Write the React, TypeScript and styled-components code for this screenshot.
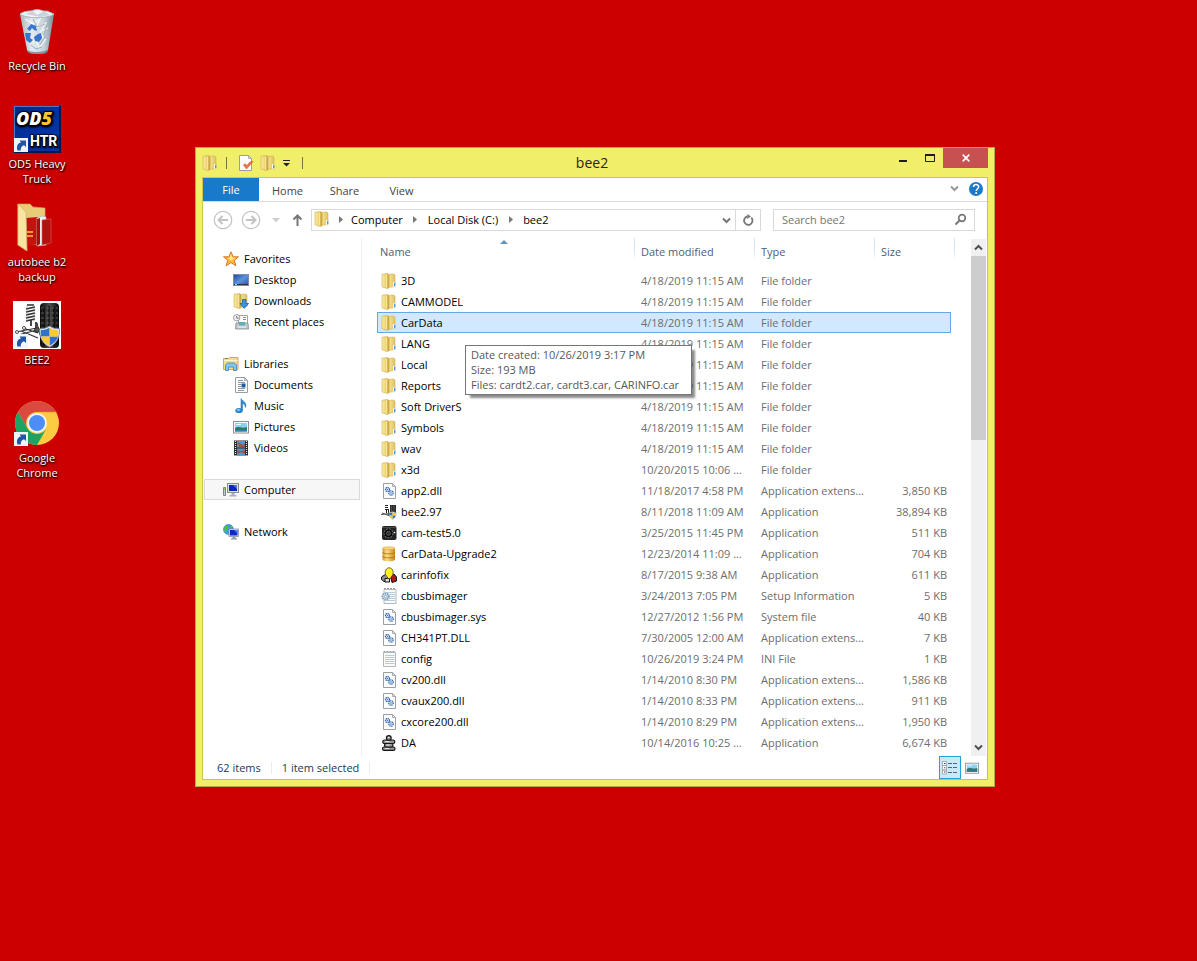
import React from 'react';
import styled, { createGlobalStyle, css } from 'styled-components';

const GlobalStyle = createGlobalStyle`
  *, *::before, *::after { box-sizing: border-box; }
  html, body { margin: 0; height: 100%; }
  body {
    background: #cc0000;
    font-family: "Open Sans", "Noto Sans", sans-serif;
    font-size: 11px;
    line-height: 15px;
    color: #000;
  }
  button, input { font: inherit; color: inherit; }
  svg { display: block; flex: none; }
`;

/* ---------- Desktop ---------- */

const Desktop = styled.main`
  position: relative;
  min-height: 100vh;
  overflow: hidden;
  background: #cc0000;
`;

const Shortcuts = styled.nav`
  display: flex;
  flex-direction: column;
  width: 74px;
  padding-top: 7px;
`;

const Shortcut = styled.button`
  display: flex;
  flex-direction: column;
  align-items: center;
  gap: 3px;
  height: 98px;
  padding: 0;
  border: 0;
  background: none;
  color: #fff;
  text-shadow: 1px 1px 2px #000, 0 1px 2px rgba(0, 0, 0, 0.8);
`;

/* ---------- Window frame ---------- */

const Window = styled.section`
  position: absolute;
  left: 195px;
  top: 147px;
  width: 800px;
  height: 640px;
  display: flex;
  flex-direction: column;
  padding: 0 6px 6px;
  border: 1px solid #b4ac45;
  background: #f1ee69;
`;

const TitleBar = styled.header`
  display: grid;
  grid-template-columns: 1fr auto 1fr;
  height: 29px;
  margin: 0 0 0 -6px;
`;

const QuickAccess = styled.div`
  display: flex;
  align-items: center;
  padding-left: 6px;
`;

const PlainButton = styled.button`
  display: flex;
  align-items: center;
  justify-content: center;
  padding: 0;
  border: 0;
  background: none;
`;

const QuickButton = styled(PlainButton)<{ $menu?: boolean }>`
  width: ${p => (p.$menu ? 15 : 22)}px;
  height: 20px;
`;

const QuickDivider = styled.span`
  width: 1px;
  height: 12px;
  margin: 0 8px;
  background: #77753b;
`;

const Title = styled.h1`
  margin: 0;
  font-size: 14px;
  font-weight: 400;
  line-height: 30px;
  color: #26261a;
`;

const Controls = styled.div`
  display: flex;
  justify-content: flex-end;
`;

const ControlButton = styled(PlainButton)<{ $close?: boolean }>`
  width: ${p => (p.$close ? 45 : 27)}px;
  height: 20px;
  background: ${p => (p.$close ? '#c75050' : 'transparent')};
`;

const Client = styled.div`
  flex: 1;
  min-height: 0;
  display: flex;
  flex-direction: column;
  border: 1px solid #c9c54f;
  background: #fff;
`;

/* ---------- Ribbon ---------- */

const Ribbon = styled.div`
  display: flex;
  height: 24px;
  border-bottom: 1px solid #dadbdc;
  padding-right: 3px;
`;

const RibbonTab = styled.button<{ $file?: boolean }>`
  width: ${p => (p.$file ? 56 : 57)}px;
  height: ${p => (p.$file ? 23 : 25)}px;
  padding: 0;
  border: 0;
  background: ${p => (p.$file ? '#1979ca' : 'transparent')};
  color: ${p => (p.$file ? '#fff' : '#444')};
`;

const RibbonTools = styled.div`
  display: flex;
  align-items: center;
  gap: 9px;
  margin-left: auto;
  padding-bottom: 2px;
`;

/* ---------- Address row ---------- */

const AddressRow = styled.div`
  display: flex;
  align-items: center;
  height: 36px;
  padding: 0 12px 0 10px;
`;

const Travel = styled.div`
  display: flex;
  align-items: center;
  width: 98px;
  gap: 8px;
`;

const AddressBox = styled.div`
  flex: 1;
  display: flex;
  height: 22px;
  border: 1px solid #d9d9d9;
`;

const Crumbs = styled.div`
  flex: 1;
  display: flex;
  align-items: center;
  padding: 0 0 2px 2px;
`;

const Crumb = styled.button`
  padding: 0;
  border: 0;
  background: none;
`;

const CrumbArrow = styled.span<{ $first: boolean }>`
  width: ${p => (p.$first ? 21 : 25)}px;
  display: flex;
  justify-content: center;
`;

const BoxButton = styled(PlainButton)<{ $divided?: boolean }>`
  width: ${p => (p.$divided ? 25 : 18)}px;
  border-left: ${p => (p.$divided ? '1px solid #d9d9d9' : '0')};
`;

const SearchBox = styled.label`
  display: flex;
  align-items: center;
  width: 202px;
  height: 22px;
  margin-left: 12px;
  padding: 0 7px 2px 8px;
  border: 1px solid #d9d9d9;
`;

const SearchInput = styled.input`
  flex: 1;
  min-width: 0;
  padding: 0;
  border: 0;
  outline: 0;
  background: none;
  &::placeholder { color: #757575; opacity: 1; }
`;

/* ---------- Body ---------- */

const Body = styled.div`
  flex: 1;
  min-height: 0;
  display: flex;
`;

const NavPane = styled.nav`
  width: 159px;
  padding: 10px 1px 0 1px;
  border-right: 1px solid #f0f0f0;
`;

const NavGroup = styled.ul`
  margin: 0 0 21px;
  padding: 0;
  list-style: none;
`;

const NavItem = styled.button<{ $child?: boolean; $current?: boolean }>`
  display: flex;
  align-items: center;
  gap: 5px;
  width: 100%;
  height: 21px;
  padding: 0 0 0 ${p => (p.$child ? 28 : 18)}px;
  border: 1px solid ${p => (p.$current ? '#dadada' : 'transparent')};
  background: ${p => (p.$current ? '#f7f7f7' : 'none')};
`;

const FilePane = styled.div`
  flex: 1;
  min-width: 0;
  overflow: hidden;
  padding: 0 20px 0 15px;
`;

const FileTable = styled.table`
  width: 100%;
  table-layout: fixed;
  border-collapse: separate;
  border-spacing: 0;
`;

const HeadCell = styled.th<{ $width?: number; $sorted?: boolean; $last?: boolean }>`
  position: relative;
  width: ${p => (p.$width ? `${p.$width}px` : 'auto')};
  height: 32px;
  padding: 0 0 5px ${p => (p.$sorted ? 3 : 6)}px;
  font-weight: 400;
  text-align: left;
  color: #4c607a;
  &::after {
    content: '';
    position: absolute;
    top: 0;
    right: ${p => (p.$last ? -4 : 0)}px;
    width: 1px;
    height: 22px;
    background: linear-gradient(#d5e5f2 60%, #fff);
  }
`;

const SortMark = styled.svg`
  position: absolute;
  left: 50%;
  top: 2px;
  margin-left: -6px;
`;

const selectedCell = css`
  background: #d1e8ff;
  border-top: 1px solid #66a7e8;
  border-bottom: 1px solid #66a7e8;
  &:first-child { border-left: 1px solid #66a7e8; padding-left: 3px; }
  &:last-child { border-right: 1px solid #66a7e8; }
`;

const Cell = styled.td<{ $selected?: boolean; $kind?: 'name' | 'size' }>`
  height: 21px;
  padding: ${p => (p.$kind === 'name' ? '0 0 0 4px' : p.$kind === 'size' ? '0 4px 0 0' : '0 8px 0 6px')};
  border: 0 solid transparent;
  line-height: 19px;
  white-space: nowrap;
  overflow: hidden;
  text-align: ${p => (p.$kind === 'size' ? 'right' : 'left')};
  color: ${p => (p.$kind === 'name' ? '#000' : '#6d6d6d')};
  ${p => p.$selected && selectedCell}
`;

const FileName = styled.span`
  display: flex;
  align-items: center;
  gap: 4px;
`;

const ScrollBar = styled.div`
  display: flex;
  flex-direction: column;
  width: 15px;
  margin: 1px 1px 0 0;
  background: #f0f0f0;
`;

const ScrollButton = styled(PlainButton)`
  height: 17px;
`;

const ScrollTrack = styled.div`
  flex: 1;
`;

const ScrollThumb = styled.div`
  height: 38%;
  background: #cdcdcd;
`;

/* ---------- Status bar ---------- */

const StatusBar = styled.footer`
  display: flex;
  align-items: center;
  height: 23px;
  padding-left: 14px;
  color: #1e395b;
`;

const StatusText = styled.span`
  padding-right: 10px;
  margin-right: 10px;
  line-height: 12px;
  border-right: 1px solid #ececec;
`;

const Views = styled.div`
  display: flex;
  margin-left: auto;
  padding-right: 4px;
`;

const ViewButton = styled(PlainButton)<{ $on?: boolean }>`
  width: 22px;
  height: 23px;
  border: 1px solid ${p => (p.$on ? '#26a0da' : 'transparent')};
  background: ${p => (p.$on ? '#cbe8f6' : 'none')};
`;

const Tooltip = styled.div`
  position: absolute;
  left: 269px;
  top: 197px;
  min-width: 227px;
  padding: 1px 5px 2px;
  border: 1px solid #767676;
  background: #fff;
  color: #575757;
  white-space: nowrap;
  box-shadow: 4px 4px 2px -1px rgba(0, 0, 0, 0.45);
`;

/* ---------- Icons ---------- */

const Defs = () => (
  <svg width="0" height="0" style={{ position: 'absolute' }} aria-hidden="true">
    <defs>
      <linearGradient id="fold" x1="0" x2="1"><stop offset="0" stopColor="#fbeea6" /><stop offset="0.55" stopColor="#edd272" /><stop offset="1" stopColor="#c9a23c" /></linearGradient>
      <linearGradient id="foldBack" x1="0" x2="1"><stop offset="0" stopColor="#bd9434" /><stop offset="0.4" stopColor="#f3de8c" /><stop offset="1" stopColor="#dfc263" /></linearGradient>
      <linearGradient id="bin" x1="0" x2="1"><stop offset="0" stopColor="#a9b6be" /><stop offset="0.35" stopColor="#e4ebf0" /><stop offset="0.7" stopColor="#c6d3db" /><stop offset="1" stopColor="#7f8b94" /></linearGradient>
      <linearGradient id="screen" x1="0" x2="1" y2="1"><stop offset="0" stopColor="#1c3f9b" /><stop offset="0.5" stopColor="#5a93e0" /><stop offset="1" stopColor="#1f55b5" /></linearGradient>
      <linearGradient id="tyre" x1="0" x2="1"><stop offset="0" stopColor="#0c0c0c" /><stop offset="0.5" stopColor="#4c4c4c" /><stop offset="1" stopColor="#060606" /></linearGradient>
      <linearGradient id="gold" x1="0" x2="1"><stop offset="0" stopColor="#d8951f" /><stop offset="0.35" stopColor="#fde08a" /><stop offset="1" stopColor="#c98418" /></linearGradient>
      <linearGradient id="od" x1="0" y1="0" x2="1" y2="1"><stop offset="0" stopColor="#002a8c" /><stop offset="1" stopColor="#0638ae" /></linearGradient>
    </defs>
  </svg>
);

const S16 = ({ children }: { children: React.ReactNode }) => (
  <svg width="16" height="16" viewBox="0 0 16 16" aria-hidden="true">{children}</svg>
);

const FolderArt = () => (
  <>
    <path d="M5.500 1.500 12.500 1 14 2 14 13.500 6 14.500z" fill="url(#foldBack)" stroke="#d1b055" strokeWidth="0.6" />
    <path d="M1 1.300 6.500.5 8 2 8 14.800 6 15.500 1 13.800z" fill="url(#fold)" stroke="#cfab4b" strokeWidth="0.6" />
    <path d="M5.500 1.500V14.800" stroke="#f9ecae" strokeWidth="0.8" />
    <path d="M12 9.200h2v4.200l-2 .4z" fill="#fff" />
    <path d="M13 9.800h1.300v3.400H13z" fill="#3f9fe2" />
  </>
);
const FolderIcon = () => <S16><FolderArt /></S16>;

const PageArt = () => (
  <>
    <path d="M1.500.5h9l3 3v12h-12z" fill="#fdfdfd" stroke="#9a9fa4" />
    <path d="M10.500.500v3h3z" fill="#e2e5e8" stroke="#9a9fa4" strokeWidth="0.8" />
  </>
);

const DllIcon = () => (
  <S16>
    <g transform="translate(1 0)">
      <PageArt />
      <circle cx="5.500" cy="6.500" r="2" fill="#e3efff" stroke="#3567ae" strokeWidth="1.300" strokeDasharray="1.200 .5" />
      <circle cx="9" cy="10" r="2.200" fill="#e3efff" stroke="#3567ae" strokeWidth="1.300" strokeDasharray="1.200 .5" />
      <circle cx="5.500" cy="6.500" r=".6" fill="#3567ae" />
      <circle cx="9" cy="10" r=".7" fill="#3567ae" />
    </g>
  </S16>
);

const NotepadArt = () => (
  <>
    <path d="M1.500 1.500h12v14h-12z" fill="#fafafa" stroke="#b3b7ba" />
    <path d="M1.500.5h12" stroke="#9a9a9a" strokeDasharray="2 1" />
    <path d="M3 4.500h9.500M3 6.500h9.500M3 8.500h9.500M3 10.500h9.500M3 12.500h9.500" stroke="#b5cddb" />
  </>
);
const IniIcon = () => <S16><g transform="translate(1 0)"><NotepadArt /></g></S16>;
const SetupIcon = () => (
  <S16>
    <g transform="translate(1.500 0)"><NotepadArt /></g>
    <circle cx="4.500" cy="8.500" r="3.200" fill="#c8dbea" stroke="#7f9fbc" strokeWidth="1.800" strokeDasharray="1.500 .8" />
    <circle cx="4.500" cy="8.500" r="1.200" fill="#fff" stroke="#7c9cb9" strokeWidth="0.7" />
  </S16>
);

const ShieldArt = () => (
  <>
    <path d="M8 0c2.400 1.700 4.800 2 7.500 2 .4 6.500-2 11-7.500 14C2.500 13 .1 8.500.5 2 3.200 2 5.600 1.700 8 0z" fill="#e6e9ec" stroke="#6b7d8e" strokeWidth="0.6" />
    <path d="M8 1.300V8H1.600C1.400 6.500 1.300 5 1.400 3 4 3 6 2.600 8 1.300zM8 8h6.400C13.500 11 11.500 13.200 8 15z" fill="#2e72c9" />
    <path d="M8 1.300V8h6.400c.2-1.500.3-3 .2-5C12 3 10 2.600 8 1.300zM8 8H1.600C2.500 11 4.500 13.200 8 15z" fill="#fbc930" />
  </>
);

const AlignArt = () => (
  <>
    <rect x="27" y="2" width="19" height="45" rx="4" fill="url(#tyre)" />
    <path d="M31 6v39M36 5v41M41 6v39" stroke="#050505" strokeWidth="1.200" />
    <path d="M28 7h17M28 12h17M28 17h17M28 22h17M28 27h17M28 32h17M28 37h17" stroke="#6b6b6b" strokeWidth=".8" strokeDasharray="3 2" />
    <path d="M14 4h7M13 8l9-2M13 11l9-2M13 14l9-2M13 17l9-2M13 20l9-2" fill="none" stroke="#2b2b2b" strokeWidth="1.600" />
    <path d="M14 4v16M21 4v16" stroke="#8a8a8a" strokeWidth=".6" />
    <path d="M18 19v6M23 21v10" stroke="#333" strokeWidth="1.800" />
    <path d="M3 31l21-4M5 34l19-5M10 27l15 5M8 30l17 7M24 22l3 12" stroke="#333" strokeWidth="1.100" fill="none" />
    <g fill="#fff" stroke="#222" strokeWidth=".8"><circle cx="4" cy="31" r="1.500" /><circle cx="11" cy="27" r="1.500" /><circle cx="24" cy="29" r="2.500" fill="#555" /></g>
  </>
);

const BeeIcon = () => (
  <S16>
    <path d="M9 1h6v9H9z" fill="#2a2a2a" />
    <path d="M10.500 1.500v8M13 1.500v8" stroke="#6d6d6d" strokeWidth=".6" />
    <path d="M4 1.500h3M4 3.500h3M4 5.500h3M5.500 6v3M7.500 5v6" stroke="#222" />
    <path d="M0 10.500l9-1M1 9l8 3" stroke="#555" strokeWidth="1.200" />
    <g transform="translate(7.500 7.500) scale(.5)"><ShieldArt /></g>
  </S16>
);

const CamIcon = () => (
  <S16>
    <rect x="1" y="1" width="14.500" height="14" rx="2" fill="#242424" />
    <path d="M1.500 2.500h13" stroke="#555" strokeWidth=".8" />
    <circle cx="7.500" cy="8.300" r="4.500" fill="#0b0b0b" stroke="#a9a9a9" strokeWidth=".7" strokeDasharray="2 1" />
    <circle cx="7.500" cy="8.300" r="2" fill="#2b2b2b" stroke="#888" strokeWidth=".6" />
    <circle cx="13.500" cy="7.500" r=".8" fill="#fff" />
  </S16>
);

const DatabaseIcon = () => (
  <S16>
    <path d="M1.500 2.500v11c0 1 2.500 1.800 6.200 1.800s6.300-.8 6.300-1.800v-11z" fill="url(#gold)" />
    <ellipse cx="7.750" cy="2.300" rx="6.250" ry="1.500" fill="#f8d67a" stroke="#d39a30" strokeWidth=".5" />
    <path d="M1.500 6.200c0 1 2.500 1.600 6.200 1.600S14 7.200 14 6.200M1.500 10.200c0 1 2.500 1.600 6.200 1.600s6.300-.6 6.300-1.600" fill="none" stroke="#a56c14" strokeWidth=".8" />
  </S16>
);

const CarInfoIcon = () => (
  <S16>
    <path d="M.5 10 5 7l2 2.500v5H3L.5 12.500z" fill="#8d8d8d" stroke="#111" />
    <path d="M9.500 9l3.500-2 2.500 3v4L11 15.500z" fill="#b11a1a" stroke="#111" />
    <path d="M4 15V11.500h4.500V15z" fill="#ddd" stroke="#111" />
    <path d="M6.500 10C2.500 7.500 4 .8 8.200.8s5.500 6.700 1.700 9.200v1.500H6.500z" fill="#fff31a" stroke="#444" strokeWidth=".8" />
  </S16>
);

const PawnIcon = () => (
  <S16>
    <g fill="#9a9a9a" stroke="#181818" strokeWidth="1.200">
      <rect x="1.500" y="12" width="12.500" height="3.300" rx="1.600" />
      <rect x="3.500" y="8.500" width="8.500" height="3.500" rx="1.700" />
      <rect x="1.800" y="5" width="12" height="3.500" rx="1.700" />
      <circle cx="7.800" cy="3" r="2.400" />
    </g>
    <path d="M4.500 6.500h4M5.500 10h3M4 13.500h4M7 2.500h1.500" stroke="#e6e6e6" />
  </S16>
);

const StarIcon = () => (
  <S16>
    <path d="M8 .8l2.100 5h5.400l-4.200 3.500 1.600 5.500L8 11.600l-4.900 3.200 1.600-5.500L.5 5.800h5.400z" fill="#fdb739" stroke="#d9772b" strokeWidth="1" strokeLinejoin="round" />
    <path d="M8 3l1.400 3.800h3.200L8 9.500 4 7h2.600z" fill="#ffe88a" />
  </S16>
);
const DesktopIcon = () => (
  <S16>
    <rect x="0.500" y="2.500" width="15" height="11" fill="url(#screen)" stroke="#7b8da1" />
    <path d="M1 12.500h14" stroke="#2a3140" /><path d="M2 12.500h2" stroke="#8dd0f2" />
  </S16>
);
const DownloadsIcon = () => (
  <S16>
    <FolderArt />
    <path d="M9.500 6.500h3.500v4h2.500L11.200 15.400 7 10.500h2.500z" fill="#3b96df" stroke="#1860ac" strokeWidth=".8" />
  </S16>
);
const RecentIcon = () => (
  <S16>
    <path d="M5.500 1.500h9v9h-9z" fill="#fdfdfd" stroke="#9aa3aa" />
    <path d="M10 3.500h3M10 5.500h3" stroke="#5d9ad0" />
    <path d="M3 9h12l.5 6h-13z" fill="#c2c8cc" stroke="#858c91" strokeWidth=".8" />
    <path d="M6 8h6v3.500H6z" fill="#5cb2b3" /><path d="M5 13h8" stroke="#f7f7f7" />
    <circle cx="3.700" cy="3.800" r="3.200" fill="#f4f4f4" stroke="#9b9b9b" /><path d="M3.700 2v2.200h2" stroke="#555" fill="none" strokeWidth=".8" />
  </S16>
);
const LibrariesIcon = () => (
  <S16>
    <path d="M.5 2.500h5l1-1h8.500v12H.5z" fill="#f3dc85" stroke="#cfae50" />
    <path d="M1 4.500h13.500" stroke="#fff6c9" /><path d="M2 2.500h3" stroke="#5aa64c" />
    <path d="M2.500 14.500V9l2-2h7l2 2v5.500h-3V11h-5v3.500z" fill="#86c6ee" stroke="#448dc4" strokeWidth=".9" />
  </S16>
);
const DocumentIcon = () => (
  <S16>
    <g transform="translate(1 0)">
      <PageArt />
      <path d="M4 3.500h5M4 5.500h7M4 7.500h3M4 9.500h3M4 11.500h7M4 13.500h6" stroke="#8c9aa7" />
      <path d="M7.500 6.500h4v4h-4z" fill="#1c5a9e" />
    </g>
  </S16>
);
const MusicIcon = () => (
  <S16>
    <path d="M8 12.200V.5c1 2.500 6.500 3.500 4.500 9-.2-2.500-1.500-3.500-3-4v7z" fill="#2f8bd2" stroke="#1f6db0" strokeWidth=".5" />
    <ellipse cx="6" cy="12.500" rx="3.700" ry="2.600" fill="#2d86cd" /><ellipse cx="5.500" cy="12" rx="1.700" ry="1" fill="#8fc7ef" />
  </S16>
);
const PictureArt = () => (
  <>
    <rect x="0.500" y="2.500" width="15" height="11.500" fill="#fff" stroke="#8d9296" />
    <path d="M2 4h12v8.500H2z" fill="#8ad0f2" /><path d="M2 9c4-2.500 6 1 12-1v4.500H2z" fill="#2f7864" /><path d="M2 11.500h12" stroke="#2b84b4" strokeWidth="1.500" />
    <path d="M3 5.500h5" stroke="#eaf8ff" />
  </>
);
const PicturesIcon = () => <S16><PictureArt /></S16>;
const VideosIcon = () => (
  <S16>
    <rect x="1" y="0.500" width="14" height="15" fill="#26282b" />
    <path d="M4 1h8v6.500H4zM4 8.500h8V15H4z" fill="#4b9bd2" />
    <path d="M5 2l5 3 2-2v4H6zM4 10l4 1 4-1v4l-4-2-3 2z" fill="#a3533e" />
    <path d="M2.500 1v14.500M13.500 1v14.500" stroke="#e8e8e8" strokeWidth="1.200" strokeDasharray="1 1" />
  </S16>
);
const ComputerIcon = () => (
  <S16>
    <path d="M.5 5.500h2v8h-2z" fill="#c5cbd0" stroke="#7d848a" /><path d="M1 7h1" stroke="#49b649" />
    <rect x="4.500" y="1.500" width="11" height="9" fill="#dde1e5" stroke="#858d95" />
    <rect x="6" y="3" width="8" height="6" fill="#0b26b8" /><path d="M10 3h4v4z" fill="#5878e6" />
    <path d="M8.500 11h3v2h2v1.500H6.500V13h2z" fill="#aab1b7" />
  </S16>
);
const NetworkIcon = () => (
  <S16>
    <circle cx="5.500" cy="5.500" r="5" fill="#3b9ce6" stroke="#2c78b5" strokeWidth=".6" />
    <path d="M2 2.500c3-2 4 0 3 2s-2 1-2 3-2 0-2-2zM7 1l3 2-2 2zM4 8l2 1-1 1.500z" fill="#4fbf4a" />
    <rect x="6" y="5" width="9.500" height="7.500" fill="#dfe5ea" stroke="#8691a0" strokeWidth=".8" /><path d="M7 6h7.500v5.500H7z" fill="#0c2bc0" /><path d="M11 6h3.500v3.500z" fill="#5c80ec" />
    <path d="M9.500 12.700h3v1.500h1.500v1.300H8v-1.300h1.500z" fill="#8f9aa6" />
  </S16>
);

const PropertiesIcon = () => (
  <S16>
    <PageArt />
    <path d="M5.500 10l3 4 6.500-7.500-3.200.6-3 3.700-1.500-2z" fill="#ef7350" stroke="#d95c3a" strokeWidth=".7" />
  </S16>
);

const Chevron = ({ up, color = '#777' }: { up?: boolean; color?: string }) => (
  <svg width="9" height="7" viewBox="0 0 9 7" fill="none" stroke={color} strokeWidth="2" aria-hidden="true">
    <path d={up ? 'M1 5.500 4.500 2 8 5.500' : 'M1 1.500 4.500 5 8 1.500'} />
  </svg>
);

const TravelIcon = ({ forward }: { forward?: boolean }) => (
  <svg width="20" height="20" viewBox="0 0 20 20" fill="none" stroke="#c3c3c3" aria-hidden="true">
    <circle cx="10" cy="10" r="8.700" strokeWidth="1.200" />
    <path d={forward ? 'M5 10h9M10.500 6l4 4-4 4' : 'M15 10H6M9.500 6l-4 4 4 4'} strokeWidth="2" />
  </svg>
);

const LinkBadge = () => (
  <>
    <rect x="1" y="33" width="14" height="14" fill="#eef4fb" />
    <path d="M4.500 45.500c-1.500-4.500.5-7.500 3.500-8l-1.500-2h6.500v6.500l-2-1.800C8.500 41 7.500 43 7.800 45.500z" fill="#2455a2" />
  </>
);

const Big = ({ children }: { children: React.ReactNode }) => (
  <svg width="48" height="48" viewBox="0 0 48 48" aria-hidden="true">{children}</svg>
);

const RecycleBinIcon = () => (
  <Big>
    <path d="M7 7 41 7 35 43c-1 3-4 4-10 4s-10-1-11-4z" fill="url(#bin)" />
    <path d="M13 42c2 4 19 4 22 0l-.6 3c-2 2-5 2-9 2s-9 0-11-2z" fill="#6a747d" opacity=".7" />
    <path d="M7 7c5-4 10-2 14-4 6-2 8 2 13 1l7 3c-6 5-28 5-34 0z" fill="#f2f5f7" stroke="#aab3b9" strokeWidth="1" />
    <path d="M12 7l8-3 4 4 7-4 6 4-9 2z" fill="#cbd4da" />
    <path d="M12 12l8 5 7-5-4 9 10-5-5 8 7-3M16 36l7-3 3 8 7-9M27 24l4 9" stroke="#fff" strokeWidth="1.300" fill="none" opacity=".75" />
    <path d="M20 12l4 8 8-3M33 28l-6 10M35 14l-4 14M18 38l5 4 6-2" stroke="#9fb0bb" strokeWidth="1" fill="none" />
    <path d="M14 22l4-5 5 2 1 5-3-1-2-2-2 3zM12 26l6 0-1 5 3 2-3 3-4-3zM22 34l-1-4 4-3 3-1 1 5-3 4z" fill="#3577cc" />
  </Big>
);

const Od5Icon = () => (
  <Big>
    <rect width="48" height="48" fill="#183f9e" />
    <rect x="1.500" y="1.500" width="45" height="45" fill="url(#od)" stroke="#4e77c6" />
    <path d="M47 1v46H1" stroke="#001752" strokeWidth="2" fill="none" />
    <g fontFamily="Open Sans, sans-serif" fontWeight="800" fontStyle="italic" fontSize="18" stroke="#000" strokeWidth="2" paintOrder="stroke">
      <text x="3" y="20" fill="#fff">OD<tspan fill="#ffc72c">5</tspan></text>
    </g>
    <text x="17" y="41" fontFamily="Roboto, sans-serif" fontWeight="700" fontSize="14" fill="#fff" stroke="#000" strokeWidth="1" paintOrder="stroke">HTR</text>
    <LinkBadge />
  </Big>
);

const BackupFolderIcon = () => (
  <Big>
    <path d="M5 1h12l3 3 12 1v36L5 42z" fill="#e8cc79" stroke="#c9a44e" strokeWidth=".7" />
    <path d="M13 15l12-1v27l-12 2z" fill="#c4120f" />
    <path d="M14 28h6v2h-6zM14 32h6v2h-6z" fill="#f59a35" />
    <path d="M24 15l5-2 4 1v28l-9 1z" fill="#eef2f4" stroke="#b6b6b6" strokeWidth=".8" />
    <path d="M24 16l3-1v26l-3 2z" fill="#a80f0d" />
    <path d="M29 17l9-1v24l-9 2z" fill="#b51010" stroke="#d86155" strokeWidth=".6" />
    <path d="M5 1l8 8 1 39-9-6z" fill="#f8e5a4" stroke="#d5b569" strokeWidth=".8" />
  </Big>
);

const Bee2Icon = () => (
  <Big>
    <rect width="48" height="48" fill="#fff" />
    <AlignArt />
    <g transform="translate(26 25) scale(1.320)"><ShieldArt /></g>
    <LinkBadge />
  </Big>
);

const ChromeIcon = () => (
  <Big>
    <circle cx="24" cy="24" r="22" fill="#fdcb42" />
    <path d="M4.950 13A22 22 0 0 1 43.050 13H24A11 11 0 0 0 14.500 29.500z" fill="#db4a3e" />
    <path d="M4.950 13A22 22 0 0 0 24 46L33.500 29.500A11 11 0 0 1 14.500 29.500z" fill="#1ea362" />
    <path d="M24 13h20.500" stroke="#d98c31" strokeWidth="1" opacity=".4" />
    <circle cx="24" cy="24" r="10" fill="#f3f5f5" /><circle cx="24" cy="24" r="8" fill="#4d8df5" />
    <LinkBadge />
  </Big>
);

/* ---------- Data ---------- */

const shortcuts = [
  { label: ['Recycle Bin'], Icon: RecycleBinIcon },
  { label: ['OD5 Heavy', 'Truck'], Icon: Od5Icon },
  { label: ['autobee b2', 'backup'], Icon: BackupFolderIcon },
  { label: ['BEE2'], Icon: Bee2Icon },
  { label: ['Google', 'Chrome'], Icon: ChromeIcon },
];

const navGroups = [
  [
    { label: 'Favorites', Icon: StarIcon },
    { label: 'Desktop', Icon: DesktopIcon },
    { label: 'Downloads', Icon: DownloadsIcon },
    { label: 'Recent places', Icon: RecentIcon },
  ],
  [
    { label: 'Libraries', Icon: LibrariesIcon },
    { label: 'Documents', Icon: DocumentIcon },
    { label: 'Music', Icon: MusicIcon },
    { label: 'Pictures', Icon: PicturesIcon },
    { label: 'Videos', Icon: VideosIcon },
  ],
  [{ label: 'Computer', Icon: ComputerIcon, current: true }],
  [{ label: 'Network', Icon: NetworkIcon }],
] as { label: string; Icon: React.FC; current?: boolean }[][];

const folder = (name: string, date = '4/18/2019 11:15 AM') => ({ name, date, type: 'File folder', size: '', Icon: FolderIcon });

const files: { name: string; date: string; type: string; size: string; Icon: React.FC }[] = [
  folder('3D'),
  folder('CAMMODEL'),
  folder('CarData'),
  folder('LANG'),
  folder('Local'),
  folder('Reports'),
  folder('Soft DriverS'),
  folder('Symbols'),
  folder('wav'),
  folder('x3d', '10/20/2015 10:06 ...'),
  { name: 'app2.dll', date: '11/18/2017 4:58 PM', type: 'Application extens...', size: '3,850 KB', Icon: DllIcon },
  { name: 'bee2.97', date: '8/11/2018 11:09 AM', type: 'Application', size: '38,894 KB', Icon: BeeIcon },
  { name: 'cam-test5.0', date: '3/25/2015 11:45 PM', type: 'Application', size: '511 KB', Icon: CamIcon },
  { name: 'CarData-Upgrade2', date: '12/23/2014 11:09 ...', type: 'Application', size: '704 KB', Icon: DatabaseIcon },
  { name: 'carinfofix', date: '8/17/2015 9:38 AM', type: 'Application', size: '611 KB', Icon: CarInfoIcon },
  { name: 'cbusbimager', date: '3/24/2013 7:05 PM', type: 'Setup Information', size: '5 KB', Icon: SetupIcon },
  { name: 'cbusbimager.sys', date: '12/27/2012 1:56 PM', type: 'System file', size: '40 KB', Icon: DllIcon },
  { name: 'CH341PT.DLL', date: '7/30/2005 12:00 AM', type: 'Application extens...', size: '7 KB', Icon: DllIcon },
  { name: 'config', date: '10/26/2019 3:24 PM', type: 'INI File', size: '1 KB', Icon: IniIcon },
  { name: 'cv200.dll', date: '1/14/2010 8:30 PM', type: 'Application extens...', size: '1,586 KB', Icon: DllIcon },
  { name: 'cvaux200.dll', date: '1/14/2010 8:33 PM', type: 'Application extens...', size: '911 KB', Icon: DllIcon },
  { name: 'cxcore200.dll', date: '1/14/2010 8:29 PM', type: 'Application extens...', size: '1,950 KB', Icon: DllIcon },
  { name: 'DA', date: '10/14/2016 10:25 ...', type: 'Application', size: '6,674 KB', Icon: PawnIcon },
  { name: '', date: '', type: '', size: '', Icon: IniIcon },
];

const path = ['Computer', 'Local Disk (C:)', 'bee2'];

export default function App() {
  return (
    <Desktop>
      <GlobalStyle />
      <Defs />
      <Shortcuts>
        {shortcuts.map(({ label, Icon }) => (
          <Shortcut key={label[0]}>
            <Icon />
            <span>{label.map(line => <React.Fragment key={line}>{line}<br /></React.Fragment>)}</span>
          </Shortcut>
        ))}
      </Shortcuts>

      <Window>
        <TitleBar>
          <QuickAccess>
            <FolderIcon />
            <QuickDivider />
            <QuickButton aria-label="Properties"><PropertiesIcon /></QuickButton>
            <QuickButton aria-label="New folder"><FolderIcon /></QuickButton>
            <QuickButton $menu aria-label="Customize Quick Access Toolbar">
              <svg width="7" height="7" viewBox="0 0 7 7"><path d="M0 .5h7" stroke="#222" /><path d="M0 3h7L3.500 6.500z" fill="#222" /></svg>
            </QuickButton>
            <QuickDivider />
          </QuickAccess>
          <Title>bee2</Title>
          <Controls>
            <ControlButton aria-label="Minimize"><svg width="8" height="8"><path d="M0 7h8" stroke="#1e1e1e" strokeWidth="2" /></svg></ControlButton>
            <ControlButton aria-label="Maximize"><svg width="10" height="8"><path d="M.5 1h9v6.500h-9z" fill="none" stroke="#1e1e1e" /><path d="M0 1h10" stroke="#1e1e1e" strokeWidth="2" /></svg></ControlButton>
            <ControlButton $close aria-label="Close"><svg width="8" height="8"><path d="M.7.7l6.600 6.600M7.300.7.7 7.300" stroke="#fff" strokeWidth="1.700" /></svg></ControlButton>
          </Controls>
        </TitleBar>

        <Client>
          <Ribbon>
            <RibbonTab $file>File</RibbonTab>
            <RibbonTab>Home</RibbonTab>
            <RibbonTab>Share</RibbonTab>
            <RibbonTab>View</RibbonTab>
            <RibbonTools>
              <PlainButton aria-label="Expand the Ribbon"><Chevron color="#999" /></PlainButton>
              <PlainButton aria-label="Help">
                <svg width="16" height="16" viewBox="0 0 16 16">
                  <circle cx="8" cy="8" r="7" fill="#1979ca" />
                  <path d="M5.500 6c0-3.300 5.200-3.200 5.200-.2C10.700 7.600 8.300 7.800 8.200 10" fill="none" stroke="#fff" strokeWidth="1.500" />
                  <path d="M7.300 11.200h1.800v1.700H7.300z" fill="#fff" />
                </svg>
              </PlainButton>
            </RibbonTools>
          </Ribbon>

          <AddressRow>
            <Travel>
              <PlainButton aria-label="Back"><TravelIcon /></PlainButton>
              <PlainButton aria-label="Forward"><TravelIcon forward /></PlainButton>
              <PlainButton aria-label="Recent locations"><svg width="15" height="5"><path d="M3 0h8L7 4.500z" fill="#cfcfcf" /></svg></PlainButton>
              <PlainButton aria-label="Up one level">
                <svg width="11" height="12" viewBox="0 0 11 12" fill="none" stroke="#777" strokeWidth="2"><path d="M5.500 12V2M1.500 5.500l4-4 4 4" /></svg>
              </PlainButton>
            </Travel>
            <AddressBox>
              <Crumbs>
                <FolderIcon />
                {path.map((part, i) => (
                  <React.Fragment key={part}>
                    <CrumbArrow $first={i === 0}><svg width="4" height="7"><path d="M0 0v7l4-3.500z" fill="#777" /></svg></CrumbArrow>
                    <Crumb>{part}</Crumb>
                  </React.Fragment>
                ))}
              </Crumbs>
              <BoxButton aria-label="Previous locations"><Chevron /></BoxButton>
              <BoxButton $divided aria-label="Refresh">
                <svg width="12" height="12" viewBox="0 0 12 12"><path d="M9.300 3.700A4.200 4.200 0 1 1 5.500 2.500" fill="none" stroke="#777" strokeWidth="1.800" /><path d="M5.300 0v5l3.700-2.500z" fill="#777" /></svg>
              </BoxButton>
            </AddressBox>
            <SearchBox>
              <SearchInput type="text" placeholder="Search bee2" aria-label="Search bee2" />
              <svg width="13" height="13" viewBox="0 0 13 13" fill="none" stroke="#777"><circle cx="8" cy="5" r="3.300" strokeWidth="1.700" /><path d="M5.500 7.500 1.500 11.500" strokeWidth="2" /></svg>
            </SearchBox>
          </AddressRow>

          <Body>
            <NavPane>
              {navGroups.map((group, g) => (
                <NavGroup key={g}>
                  {group.map(({ label, Icon, current }, i) => (
                    <li key={label}>
                      <NavItem $child={i > 0} $current={current}><Icon />{label}</NavItem>
                    </li>
                  ))}
                </NavGroup>
              ))}
            </NavPane>
            <FilePane>
              <FileTable>
                <thead>
                  <tr>
                    <HeadCell $sorted>
                      Name
                      <SortMark width="8" height="4"><path d="M0 4 4 0l4 4z" fill="#5f93bd" /></SortMark>
                    </HeadCell>
                    <HeadCell $width={120}>Date modified</HeadCell>
                    <HeadCell $width={120}>Type</HeadCell>
                    <HeadCell $width={76} $last>Size</HeadCell>
                  </tr>
                </thead>
                <tbody>
                  {files.map(({ name, date, type, size, Icon }) => {
                    const selected = name === 'CarData';
                    return (
                      <tr key={name}>
                        <Cell $kind="name" $selected={selected}><FileName><Icon />{name}</FileName></Cell>
                        <Cell $selected={selected}>{date}</Cell>
                        <Cell $selected={selected}>{type}</Cell>
                        <Cell $kind="size" $selected={selected}>{size}</Cell>
                      </tr>
                    );
                  })}
                </tbody>
              </FileTable>
            </FilePane>
            <ScrollBar>
              <ScrollButton aria-label="Scroll up"><Chevron up color="#505050" /></ScrollButton>
              <ScrollTrack><ScrollThumb /></ScrollTrack>
              <ScrollButton aria-label="Scroll down"><Chevron color="#505050" /></ScrollButton>
            </ScrollBar>
          </Body>

          <StatusBar>
            <StatusText>62 items</StatusText>
            <StatusText>1 item selected</StatusText>
            <Views>
              <ViewButton $on aria-label="Details view">
                <svg width="16" height="14" viewBox="0 0 16 14">
                  <path d="M.5.500h4v4h-4zM.5 4.500h4v4.500h-4zM.5 9h4v4h-4z" fill="#fff" stroke="#9aa0a6" strokeWidth=".8" />
                  <path d="M2 2.500h1.500M2 11h1.500" stroke="#345" /><path d="M2 6.800h1.500" stroke="#c23" />
                  <path d="M6 2.500h4M11 2.500h4M6 6.500h4M11 6.500h4M6 11.500h4M11 11.500h4" stroke="#47698c" />
                </svg>
              </ViewButton>
              <ViewButton aria-label="Large thumbnails view"><svg width="14" height="14" viewBox="0 0 16 16"><PictureArt /></svg></ViewButton>
            </Views>
          </StatusBar>
        </Client>

        <Tooltip role="tooltip">
          Date created: 10/26/2019 3:17 PM<br />
          Size: 193 MB<br />
          Files: cardt2.car, cardt3.car, CARINFO.car
        </Tooltip>
      </Window>
    </Desktop>
  );
}
